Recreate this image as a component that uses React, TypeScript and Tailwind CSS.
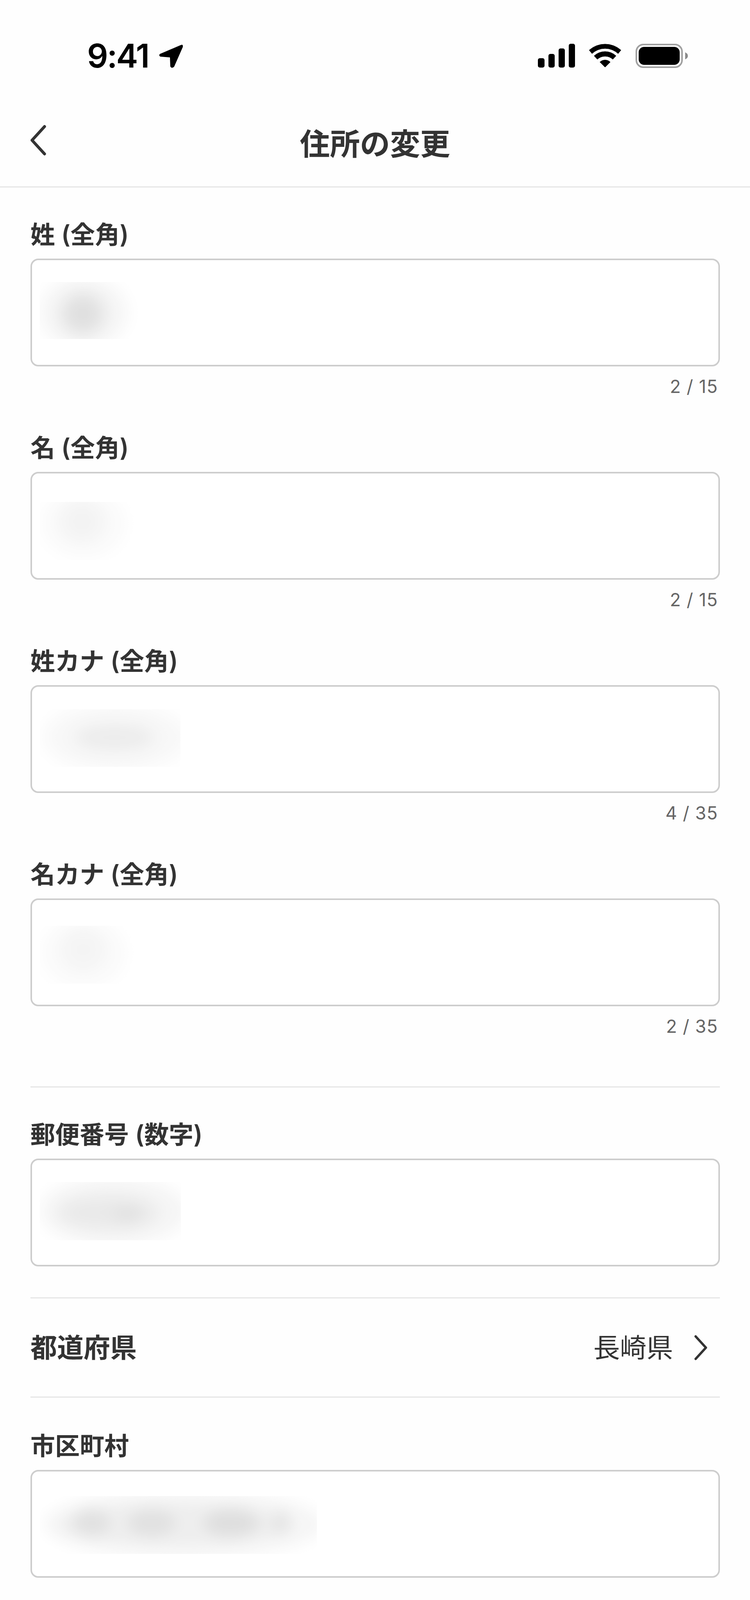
import React from 'react';

type Spot = { cx: number; cy: number; rx: number; ry: number; fill: string };

type BlurProps = {
  width: number;
  height: number;
  blur: number;
  spots: Spot[];
  className: string;
};

// redacted input value: soft grey smudge, hard-cropped like the reference
const BlurredValue = ({ width, height, blur, spots, className }: BlurProps) => {
  const id = `smudge-${width}-${height}-${blur}-${spots.length}-${spots[0].cx}`;
  return (
    <svg width={width} height={height} viewBox={`0 0 ${width} ${height}`} className={className}>
      <defs>
        <filter id={id} filterUnits="userSpaceOnUse" x={-200} y={-200} width={width + 400} height={height + 400}>
          <feGaussianBlur stdDeviation={blur} />
        </filter>
      </defs>
      <g filter={`url(#${id})`}>
        {spots.map((s) => (
          <ellipse key={`${s.cx}-${s.cy}-${s.rx}`} cx={s.cx} cy={s.cy} rx={s.rx} ry={s.ry} fill={s.fill} />
        ))}
      </g>
    </svg>
  );
};

const Label = ({ children }: { children: React.ReactNode }) => (
  <p className="h-[68px] mb-[28px] text-[63px] leading-[68px] font-semibold text-[#333333]">{children}</p>
);

const InputBox = ({ children }: { children: React.ReactNode }) => (
  <div className="h-[276px] rounded-[20px] border-[4px] border-[#cdcdcd] bg-white pl-[20px] overflow-hidden">{children}</div>
);

const Counter = ({ text }: { text: string }) => (
  <p className="mt-[26px] h-[50px] pr-[5px] text-right text-[46px] leading-[50px] tracking-[1px] text-[#666666]">{text}</p>
);

const Divider = ({ className }: { className: string }) => <div className={`h-[3px] bg-[#e6e6e6] ${className}`} />;

const Chevron = ({ dir, className }: { dir: 'left' | 'right'; className: string }) => (
  <svg viewBox="0 0 44 78" className={className} fill="none" stroke="#333333" strokeWidth="7.5" strokeLinecap="round" strokeLinejoin="round">
    <path d={dir === 'left' ? 'M38 4 L6 39 L38 74' : 'M6 4 L38 39 L6 74'} />
  </svg>
);

const fields = [
  {
    label: '姓 (全角)',
    count: '2 / 15',
    blur: (
      <BlurredValue
        width={250}
        height={146}
        blur={20}
        className="mt-[56px]"
        spots={[
          { cx: 112, cy: 78, rx: 112, ry: 90, fill: '#f5f5f5' },
          { cx: 110, cy: 81, rx: 55, ry: 52, fill: '#e0e0e0' },
        ]}
      />
    ),
  },
  {
    label: '名 (全角)',
    count: '2 / 15',
    blur: (
      <BlurredValue
        width={248}
        height={149}
        blur={20}
        className="mt-[73px]"
        spots={[
          { cx: 112, cy: 55, rx: 108, ry: 88, fill: '#fafafa' },
          { cx: 108, cy: 50, rx: 55, ry: 50, fill: '#f3f3f3' },
        ]}
      />
    ),
  },
  {
    label: '姓カナ (全角)',
    count: '4 / 35',
    blur: (
      <BlurredValue
        width={360}
        height={147}
        blur={20}
        className="mt-[58px]"
        spots={[
          { cx: 195, cy: 72, rx: 185, ry: 88, fill: '#f8f8f8' },
          { cx: 191, cy: 72, rx: 105, ry: 34, fill: '#ececec' },
        ]}
      />
    ),
  },
  {
    label: '名カナ (全角)',
    count: '2 / 35',
    blur: (
      <BlurredValue
        width={248}
        height={148}
        blur={20}
        className="mt-[66px]"
        spots={[
          { cx: 112, cy: 70, rx: 108, ry: 88, fill: '#fafafa' },
          { cx: 111, cy: 61, rx: 55, ry: 52, fill: '#f4f4f4' },
        ]}
      />
    ),
  },
];

const App = () => {
  return (
    <div className="h-[4162px] w-full overflow-hidden bg-[#fefefe] font-['Inter','Noto_Sans_CJK_JP',sans-serif]">
      {/* status bar */}
      <div className="flex h-[250px] items-start justify-between pl-[223px] pr-[159px] pt-[112px]">
        <div className="flex items-start">
          <span className="h-[62px] text-[84px] leading-[62px] font-semibold tracking-[-3px] text-black">9:41</span>
          <svg width="66" height="62" viewBox="0 0 66 62" className="ml-[24px]">
            <path
              d="M60 4 L6 27 Q3 30 7 32 L32 34 L33 58 Q36 63 41 58 L63 8 Q64 2 60 4 Z"
              fill="#000000"
              stroke="#000000"
              strokeWidth="2"
              strokeLinejoin="round"
            />
          </svg>
        </div>
        <div className="flex items-start">
          <svg width="95" height="61" viewBox="0 0 95 61">
            <rect x="0" y="37" width="17" height="24" rx="5" fill="#000000" />
            <rect x="27" y="26" width="16" height="35" rx="5" fill="#000000" />
            <rect x="53" y="12" width="16" height="49" rx="5" fill="#000000" />
            <rect x="79" y="0" width="16" height="61" rx="5" fill="#000000" />
          </svg>
          <svg width="84" height="61" viewBox="0 0 84 61" className="ml-[35px]" fill="#000000" stroke="#000000" strokeWidth="1" strokeLinejoin="round">
            <path d="M1.4 16.4 A61 61 0 0 1 82.6 16.4 L75.4 25.2 A49 49 0 0 0 8.6 25.2 Z" />
            <path d="M14 31 A41 41 0 0 1 70 31 L61.8 39.8 A29 29 0 0 0 22.2 39.8 Z" />
            <path d="M28.8 46.9 A19.3 19.3 0 0 1 55.2 46.9 L42 60 Z" />
          </svg>
          <div className="ml-[36px] flex h-[62px] items-center">
            <div className="flex h-[62px] w-[121px] rounded-[20px] border-[4px] border-[#a0a0a0] p-[4px]">
              <div className="h-full w-full rounded-[14px] bg-black" />
            </div>
            <svg width="7" height="18" viewBox="0 0 7 18" className="ml-[6px]">
              <path d="M0 0 Q7 3 7 9 Q7 15 0 18 Z" fill="#8a8a8a" />
            </svg>
          </div>
        </div>
      </div>

      {/* header */}
      <div className="grid h-[230px] grid-cols-[1fr_auto_1fr] items-start border-b-[3px] border-[#e6e6e6] pl-[76px] pr-[76px]">
        <Chevron dir="left" className="mt-[70px] h-[78px] w-[44px]" />
        <h1 className="mt-[75px] text-[77px] leading-[88px] font-semibold text-[#333333]">住所の変更</h1>
      </div>

      {/* form */}
      <div className="pl-[78px] pr-[77px] pt-[86px]">
        {fields.map((field) => (
          <div key={field.label} className="mb-[98px]">
            <Label>{field.label}</Label>
            <InputBox>{field.blur}</InputBox>
            <Counter text={field.count} />
          </div>
        ))}

        <Divider className="mt-[129px]" />

        <div className="mt-[86px]">
          <Label>郵便番号 (数字)</Label>
          <InputBox>
            <BlurredValue
              width={361}
              height={149}
              blur={20}
              className="mt-[56px]"
              spots={[
                { cx: 190, cy: 75, rx: 188, ry: 88, fill: '#f5f5f5' },
                { cx: 175, cy: 78, rx: 128, ry: 42, fill: '#e9e9e9' },
                { cx: 225, cy: 82, rx: 35, ry: 20, fill: '#e0e0e0' },
              ]}
            />
          </InputBox>
        </div>

        <Divider className="mt-[79px]" />

        <div className="flex h-[251px] items-center justify-between">
          <span className="text-[68px] font-semibold text-[#333333]">都道府県</span>
          <div className="flex items-center">
            <span className="text-[68px] font-normal text-[#333333]">長崎県</span>
            <Chevron dir="right" className="ml-[52px] mr-[30px] h-[64px] w-[38px]" />
          </div>
        </div>

        <Divider className="" />

        <div className="mt-[89px]">
          <Label>市区町村</Label>
          <InputBox>
            <BlurredValue
              width={709}
              height={148}
              blur={18}
              className="mt-[63px]"
              spots={[
                { cx: 370, cy: 72, rx: 360, ry: 88, fill: '#f6f6f6' },
                { cx: 350, cy: 72, rx: 300, ry: 52, fill: '#eeeeee' },
                { cx: 132, cy: 68, rx: 48, ry: 36, fill: '#e1e1e1' },
                { cx: 286, cy: 68, rx: 62, ry: 36, fill: '#e1e1e1' },
                { cx: 490, cy: 68, rx: 72, ry: 38, fill: '#dfdfdf' },
                { cx: 617, cy: 68, rx: 24, ry: 30, fill: '#e4e4e4' },
              ]}
            />
          </InputBox>
        </div>

        <div className="mt-[89px]">
          <Label>番地</Label>
        </div>
      </div>
    </div>
  );
};

export default App;
